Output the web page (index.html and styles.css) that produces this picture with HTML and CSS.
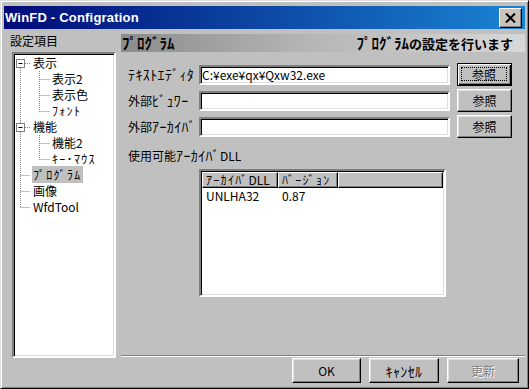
FILE: index.html
```html
<!DOCTYPE html>
<html lang="ja">
<head>
<meta charset="utf-8">
<title>WinFD - Configration</title>
<link rel="stylesheet" href="styles.css">
</head>
<body>
<div class="window">
  <div class="titlebar">
    <span class="title">WinFD - Configration</span>
    <div class="close">
      <svg width="11" height="10" viewBox="0 0 11 10"><path d="M1 0.5 L10 9.5 M10 0.5 L1 9.5" stroke="#000" stroke-width="2" fill="none"/></svg>
    </div>
  </div>
  <div class="main">
    <div class="left">
      <div class="left-label">設定項目</div>
      <div class="tree">
        <svg class="tree-lines" width="100" height="302" viewBox="0 0 100 302">
          <g stroke="#808080" stroke-width="1" stroke-dasharray="1 1" fill="none">
            <path d="M6.5 14 V153.5"/>
            <path d="M11 9.5 H16 M11 73.5 H16 M6.5 121.5 H16 M6.5 137.5 H16 M6.5 153.5 H16"/>
            <path d="M25.5 17 V57.5 M25.5 25.5 H36 M25.5 41.5 H36 M25.5 57.5 H36"/>
            <path d="M25.5 81 V105.5 M25.5 89.5 H36 M25.5 105.5 H36"/>
          </g>
          <g>
            <rect x="2.5" y="5.5" width="8" height="8" fill="#fff" stroke="#808080"/>
            <path d="M4.5 9.5 H8.5" stroke="#000"/>
            <rect x="2.5" y="69.5" width="8" height="8" fill="#fff" stroke="#808080"/>
            <path d="M4.5 73.5 H8.5" stroke="#000"/>
          </g>
        </svg>
        <ul class="tree-list">
          <li class="lv0">表示</li>
          <li class="lv1">表示2</li>
          <li class="lv1">表示色</li>
          <li class="lv1"><span class="hw">ﾌｫﾝﾄ</span></li>
          <li class="lv0">機能</li>
          <li class="lv1">機能2</li>
          <li class="lv1"><span class="hw">ｷｰ･ﾏｳｽ</span></li>
          <li class="lv0"><span class="selected hw">ﾌﾟﾛｸﾞﾗﾑ</span></li>
          <li class="lv0">画像</li>
          <li class="lv0">WfdTool</li>
        </ul>
      </div>
    </div>
    <div class="panel">
      <div class="panel-head">
        <span class="hw">ﾌﾟﾛｸﾞﾗﾑ</span>
        <span><span class="hw">ﾌﾟﾛｸﾞﾗﾑ</span>の設定を行います</span>
      </div>
      <div class="form">
        <div class="row">
          <span class="label hw">ﾃｷｽﾄｴﾃﾞｨﾀ</span>
          <div class="field">C:¥exe¥qx¥Qxw32.exe</div>
          <div class="btn default ref"><span class="focus">参照</span></div>
        </div>
        <div class="row">
          <span class="label">外部<span class="hw">ﾋﾞｭﾜｰ</span></span>
          <div class="field"></div>
          <div class="btn ref">参照</div>
        </div>
        <div class="row">
          <span class="label">外部<span class="hw">ｱｰｶｲﾊﾞ</span></span>
          <div class="field"></div>
          <div class="btn ref">参照</div>
        </div>
      </div>
      <div class="dll-label">使用可能<span class="hw">ｱｰｶｲﾊﾞ</span>DLL</div>
      <div class="listview">
        <div class="lv-head">
          <div class="lv-col c1"><span class="hw">ｱｰｶｲﾊﾞ</span>DLL</div>
          <div class="lv-col c2"><span class="hw">ﾊﾞｰｼﾞｮﾝ</span></div>
          <div class="lv-col filler"></div>
        </div>
        <div class="lv-row">
          <div class="lv-cell c1">UNLHA32</div>
          <div class="lv-cell c2">0.87</div>
        </div>
      </div>
    </div>
  </div>
  <div class="footer">
    <div class="btn fbtn b-ok">OK</div>
    <div class="btn fbtn b-cancel"><span class="hw">ｷｬﾝｾﾙ</span></div>
    <div class="btn fbtn b-upd disabled">更新</div>
  </div>
</div>
</body>
</html>
```
FILE: styles.css
```css
* { box-sizing: border-box; }
html, body { margin: 0; padding: 0; background: #c0c0c0; }
body {
  font-family: "Noto Sans CJK JP", "Liberation Sans", sans-serif;
  font-size: 12px;
  color: #000;
}
.window {
  width: 529px;
  height: 389px;
  background: #c0c0c0;
  border: 1px solid;
  border-color: #dfdfdf #000 #000 #dfdfdf;
  box-shadow: inset 1px 1px #fff, inset -1px -1px #808080;
  padding: 5px 3px 2px 3px;
  display: flex;
  flex-direction: column;
}
.hw { font-size: 14px; letter-spacing: 0.4px; }
.titlebar {
  height: 23px;
  flex: none;
  display: flex;
  align-items: center;
  justify-content: space-between;
  padding-left: 1px;
  background: linear-gradient(90deg, #000a78 0%, #0a3c9c 40%, #1a84d4 100%);
}
.title {
  color: #fff;
  font-family: "Liberation Sans", sans-serif;
  font-weight: bold;
  font-size: 13px;
  letter-spacing: 0.2px;
}
.close {
  width: 23px;
  height: 20px;
  margin-right: 3px;
  background: #c8c4bc;
  border: 1px solid;
  border-color: #fff #000 #000 #fff;
  box-shadow: inset -1px -1px #808080;
  display: flex;
  align-items: center;
  justify-content: center;
}
.main {
  display: flex;
  height: 329px;
  flex: none;
}
.left {
  width: 112px;
  flex: none;
  display: flex;
  flex-direction: column;
}
.left-label {
  padding-left: 6px;
  margin-top: 4px;
  line-height: 16px;
  height: 16px;
}
.tree {
  position: relative;
  margin-top: 3px;
  margin-left: 8px;
  width: 104px;
  height: 306px;
  background: #fff;
  border: 2px solid;
  border-color: #808080 #fff #fff #808080;
  box-shadow: inset 1px 1px #000, inset -1px -1px #dfdfdf;
}
.tree-lines {
  position: absolute;
  left: 0;
  top: 0;
}
.tree-list {
  position: relative;
  list-style: none;
  margin: 0;
  padding: 1px 0 0 0;
}
.tree-list li {
  height: 16px;
  line-height: 16px;
  white-space: nowrap;
}
.tree-list .hw { font-size: 12px; letter-spacing: 1.3px; line-height: 16px; }
.tree-list .lv0 { padding-left: 19px; }
.tree-list .lv1 { padding-left: 38px; }
.selected {
  background: #c0c0c0;
  padding: 0 1px;
  margin-left: -1px;
}
.panel {
  margin-left: 5px;
  margin-top: 5px;
  width: 404px;
  height: 322px;
  flex: none;
  border-bottom: 1px solid #808080;
  box-shadow: 0 1px #fff;
}
.panel-head {
  height: 18px;
  display: flex;
  align-items: center;
  justify-content: space-between;
  padding: 0 12px 0 1px;
  font-weight: bold;
  font-size: 13px;
  line-height: 18px;
  background: linear-gradient(90deg, #8c8c8c 0%, #b4b4b4 45%, #d8d8d8 100%);
}
.panel-head .hw { font-size: 15px; letter-spacing: 0; line-height: 18px; }
.form {
  padding: 11px 0 0 7px;
}
.row {
  display: flex;
  align-items: flex-start;
  height: 23px;
  margin-bottom: 3px;
}
.label {
  width: 71px;
  flex: none;
  line-height: 22px;
  white-space: nowrap;
}
.field {
  width: 251px;
  height: 20px;
  margin-top: 2px;
  flex: none;
  background: #fff;
  border: 2px solid;
  border-color: #808080 #fff #fff #808080;
  box-shadow: inset 1px 1px #000, inset -1px -1px #dfdfdf;
  padding-left: 1px;
  line-height: 16px;
  white-space: nowrap;
}
.btn {
  background: #c0c0c0;
  border: 1px solid;
  border-color: #fff #000 #000 #fff;
  box-shadow: inset -1px -1px #808080, inset 1px 1px #dfdfdf;
  display: flex;
  align-items: center;
  justify-content: center;
  white-space: nowrap;
  flex: none;
}
.btn.default {
  border-color: #000;
  box-shadow: inset 1px 1px #fff, inset -1px -1px #000, inset -2px -2px #808080;
  align-items: stretch;
  padding: 3px 4px 4px 3px;
}
.focus {
  flex: 1;
  border: 1px dotted #000;
  display: flex;
  align-items: center;
  justify-content: center;
}
.ref {
  width: 55px;
  height: 23px;
  margin-left: 7px;
}
.dll-label {
  margin-top: 9px;
  padding-left: 7px;
  line-height: 16px;
  height: 16px;
}
.listview {
  margin-top: 6px;
  margin-left: 78px;
  width: 247px;
  height: 128px;
  background: #fff;
  border: 2px solid;
  border-color: #808080 #fff #fff #808080;
  box-shadow: inset 1px 1px #000, inset -1px -1px #dfdfdf;
  padding: 1px 1px;
}
.lv-head {
  display: flex;
  height: 16px;
}
.lv-col {
  background: #c0c0c0;
  border: 1px solid;
  border-color: #fff #000 #000 #fff;
  box-shadow: inset -1px -1px #808080;
  line-height: 14px;
  padding-left: 3px;
  white-space: nowrap;
}
.lv-col .hw { font-size: 12px; letter-spacing: 1.3px; line-height: 14px; }
.lv-col.c1 { width: 76px; }
.lv-col.c2 { width: 60px; }
.lv-col.filler { flex: 1; }
.lv-row {
  display: flex;
  height: 16px;
  line-height: 16px;
}
.lv-cell { padding-left: 4px; white-space: nowrap; }
.lv-cell.c1 { width: 76px; }
.lv-cell.c2 { width: 60px; }
.footer {
  display: flex;
  justify-content: flex-end;
  gap: 8px;
  padding-right: 6px;
}
.fbtn { height: 25px; }
.b-ok { width: 69px; }
.b-cancel { width: 70px; }
.b-upd { width: 72px; }
.disabled {
  color: #808080;
  text-shadow: 1px 1px #fff;
}
```
